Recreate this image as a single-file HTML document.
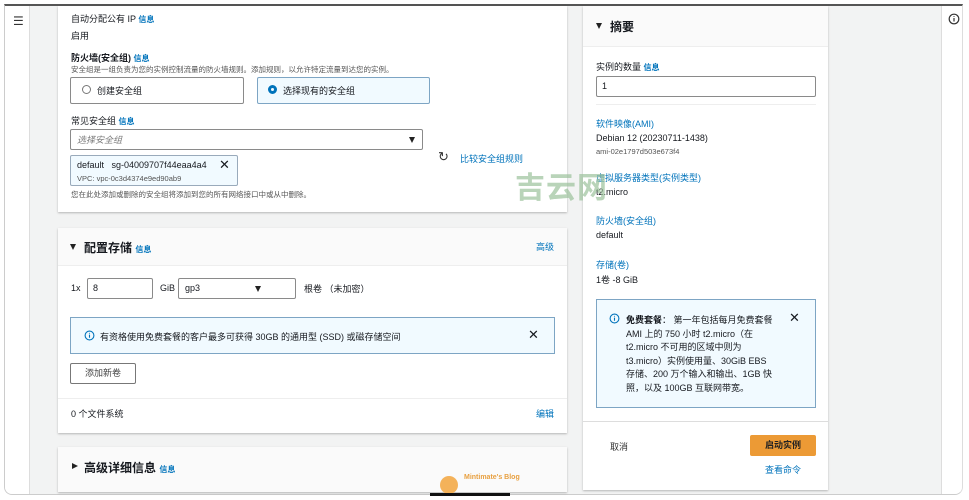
<!DOCTYPE html>
<html><head><meta charset="utf-8"><style>
*{margin:0;padding:0;box-sizing:border-box}
body{width:969px;height:500px;background:#fff;position:relative;overflow:hidden;font-family:"Liberation Sans","Noto Sans CJK SC",sans-serif;color:#16191f;font-size:9px}
.a{position:absolute}
.frame{left:4px;top:4px;width:959px;height:491px;border-top:2px solid #555;border-left:1px solid #ccc;border-right:1px solid #ddd;border-bottom:1px solid #ccc;border-radius:0 0 8px 8px;background:#f2f3f3;overflow:hidden}
.panel{background:#fff;box-shadow:0 1px 2px rgba(0,0,0,.25)}
.lnk{color:#0073bb}
.info{color:#0073bb;font-size:8px;font-weight:bold}
.inp{border:1px solid #8a8a8a;border-radius:2px;background:#fff}
.sm{font-size:8px;color:#555}
.h{font-weight:bold;font-size:12px}
.tri{display:inline-block;width:0;height:0;border-left:3.5px solid transparent;border-right:3.5px solid transparent;border-top:6px solid #222}
.trir{display:inline-block;width:0;height:0;border-top:3.5px solid transparent;border-bottom:3.5px solid transparent;border-left:6px solid #222}
</style></head><body>
<div class="a frame">
 <div class="a" style="left:0;top:0;width:25px;height:500px;background:#fff;border-right:1px solid #ddd"></div>
 <div class="a" style="left:936px;top:0;width:24px;height:500px;background:#fff;border-left:1px solid #ddd"></div>
</div>
<div class="a" style="left:13px;top:14px;font-size:12px;color:#333">☰</div>
<svg class="a" style="left:948px;top:13px" width="12" height="12" viewBox="0 0 12 12"><circle cx="6" cy="6" r="4.8" fill="none" stroke="#333" stroke-width="1.2"/><path d="M6 5v3.5M6 3.2v.8" stroke="#333" stroke-width="1.2"/></svg>

<!-- top panel -->
<div class="a panel" style="left:58px;top:6px;width:509px;height:206px"></div>
<div class="a" style="left:71px;top:12px">自动分配公有 IP <span class="info">信息</span></div>
<div class="a" style="left:71px;top:29px">启用</div>
<div class="a" style="left:71px;top:51px;font-weight:bold">防火墙(安全组) <span class="info">信息</span></div>
<div class="a sm" style="left:71px;top:64px;font-size:7.5px">安全组是一组负责为您的实例控制流量的防火墙规则。添加规则，以允许特定流量到达您的实例。</div>
<div class="a inp" style="left:70px;top:77px;width:174px;height:27px"></div>
<div class="a" style="left:82px;top:85px;width:9px;height:9px;border:1px solid #777;border-radius:50%"></div>
<div class="a" style="left:97px;top:84px">创建安全组</div>
<div class="a" style="left:257px;top:77px;width:173px;height:27px;border:1px solid #7da5c4;background:#f1faff;border-radius:2px"></div>
<div class="a" style="left:268px;top:85px;width:9px;height:9px;border:3px solid #0073bb;border-radius:50%"></div>
<div class="a" style="left:283px;top:84px">选择现有的安全组</div>
<div class="a" style="left:71px;top:114px">常见安全组 <span class="info">信息</span></div>
<div class="a inp" style="left:70px;top:129px;width:353px;height:21px"></div>
<div class="a" style="left:77px;top:133px;color:#777;font-style:italic">选择安全组</div>
<div class="a tri" style="left:409px;top:137px"></div>
<div class="a" style="left:70px;top:155px;width:168px;height:31px;border:1px solid #9ab;background:#f1faff;border-radius:2px"></div>
<div class="a" style="left:77px;top:160px">default&nbsp;&nbsp; sg-04009707f44eaa4a4</div>
<div class="a" style="left:219px;top:157px;font-size:13px">✕</div>
<div class="a sm" style="left:77px;top:174px;font-size:7.5px">VPC: vpc-0c3d4374e9ed90ab9</div>
<div class="a sm" style="left:71px;top:189px;font-size:7.5px">您在此处添加或删除的安全组将添加到您的所有网络接口中或从中删除。</div>
<div class="a" style="left:438px;top:149px;font-size:13px;color:#333">↻</div>
<div class="a lnk" style="left:460px;top:152px">比较安全组规则</div>

<!-- storage panel -->
<div class="a panel" style="left:58px;top:228px;width:509px;height:205px"></div>
<div class="a" style="left:58px;top:228px;width:509px;height:38px;background:#fafafa;border-bottom:1px solid #eee"></div>
<div class="a tri" style="left:70px;top:244px"></div>
<div class="a h" style="left:84px;top:239px">配置存储 <span class="info">信息</span></div>
<div class="a lnk" style="left:536px;top:240px">高级</div>
<div class="a" style="left:71px;top:283px">1x</div>
<div class="a inp" style="left:87px;top:278px;width:66px;height:21px"></div>
<div class="a" style="left:93px;top:283px">8</div>
<div class="a" style="left:160px;top:283px">GiB</div>
<div class="a inp" style="left:178px;top:278px;width:118px;height:21px"></div>
<div class="a" style="left:185px;top:283px">gp3</div>
<div class="a tri" style="left:255px;top:286px"></div>
<div class="a" style="left:304px;top:282px">根卷 （未加密）</div>
<div class="a" style="left:70px;top:317px;width:485px;height:37px;border:1px solid #7da5c4;background:#f1faff"></div>
<svg class="a" style="left:84px;top:330px" width="11" height="11" viewBox="0 0 12 12"><circle cx="6" cy="6" r="4.8" fill="none" stroke="#0073bb" stroke-width="1.2"/><path d="M6 5v3.5M6 3.2v.8" stroke="#0073bb" stroke-width="1.2"/></svg>
<div class="a" style="left:100px;top:330px">有资格使用免费套餐的客户最多可获得 30GB 的通用型 (SSD) 或磁存储空间</div>
<div class="a" style="left:528px;top:327px;font-size:13px">✕</div>
<div class="a" style="left:70px;top:363px;width:66px;height:21px;border:1px solid #777;border-radius:2px;text-align:center;line-height:19px;color:#444">添加新卷</div>
<div class="a" style="left:58px;top:398px;width:509px;border-top:1px solid #eee"></div>
<div class="a" style="left:71px;top:407px">0 个文件系统</div>
<div class="a lnk" style="left:536px;top:407px">编辑</div>

<!-- advanced -->
<div class="a panel" style="left:58px;top:447px;width:509px;height:45px;background:#fafafa"></div>
<div class="a trir" style="left:72px;top:463px"></div>
<div class="a h" style="left:84px;top:459px">高级详细信息 <span class="info">信息</span></div>
<div class="a" style="left:440px;top:476px;width:18px;height:18px;border-radius:50%;background:#f4b25a"></div>
<div class="a" style="left:464px;top:474px;font-size:7px;color:#e8a040;font-weight:bold">Mintimate's Blog</div>
<div class="a" style="left:430px;top:493px;width:80px;height:3px;background:#111"></div>

<!-- summary -->
<div class="a panel" style="left:583px;top:6px;width:245px;height:484px"></div>
<div class="a" style="left:583px;top:6px;width:245px;height:41px;background:#fafafa;border-bottom:1px solid #eee"></div>
<div class="a tri" style="left:596px;top:23px"></div>
<div class="a h" style="left:610px;top:18px">摘要</div>
<div class="a" style="left:596px;top:60px">实例的数量 <span class="info">信息</span></div>
<div class="a inp" style="left:596px;top:76px;width:220px;height:21px"></div>
<div class="a" style="left:602px;top:81px">1</div>
<div class="a" style="left:596px;top:104px;width:220px;border-top:1px solid #eee"></div>
<div class="a lnk" style="left:596px;top:117px">软件映像(AMI)</div>
<div class="a" style="left:596px;top:133px">Debian 12 (20230711-1438)</div>
<div class="a sm" style="left:596px;top:147px;font-size:7.5px">ami-02e1797d503e673f4</div>
<div class="a lnk" style="left:596px;top:171px">虚拟服务器类型(实例类型)</div>
<div class="a" style="left:596px;top:187px">t2.micro</div>
<div class="a lnk" style="left:596px;top:214px">防火墙(安全组)</div>
<div class="a" style="left:596px;top:230px">default</div>
<div class="a lnk" style="left:596px;top:258px">存储(卷)</div>
<div class="a" style="left:596px;top:273px">1卷 -8 GiB</div>
<div class="a" style="left:596px;top:299px;width:220px;height:109px;border:1px solid #7da5c4;background:#f1faff"></div>
<svg class="a" style="left:609px;top:313px" width="11" height="11" viewBox="0 0 12 12"><circle cx="6" cy="6" r="4.8" fill="none" stroke="#0073bb" stroke-width="1.2"/><path d="M6 5v3.5M6 3.2v.8" stroke="#0073bb" stroke-width="1.2"/></svg>
<div class="a" style="left:626px;top:314px;width:170px;line-height:13.6px;white-space:nowrap"><b>免费套餐</b>： 第一年包括每月免费套餐<br>AMI 上的 750 小时 t2.micro（在<br>t2.micro 不可用的区域中则为<br>t3.micro）实例使用量、30GiB EBS<br>存储、200 万个输入和输出、1GB 快<br>照，以及 100GB 互联网带宽。</div>
<div class="a" style="left:789px;top:310px;font-size:13px">✕</div>
<div class="a" style="left:583px;top:421px;width:245px;border-top:1px solid #ddd"></div>
<div class="a" style="left:610px;top:440px;color:#333">取消</div>
<div class="a" style="left:750px;top:435px;width:66px;height:21px;background:#ec9a35;border-radius:2px;text-align:center;line-height:21px;font-weight:bold;color:#222">启动实例</div>
<div class="a lnk" style="left:765px;top:463px">查看命令</div>

<div class="a" style="left:515px;top:163px;font-size:30px;color:#9cc29c;opacity:.7;font-weight:bold;letter-spacing:1px;z-index:5">吉云网</div>
</body></html>
